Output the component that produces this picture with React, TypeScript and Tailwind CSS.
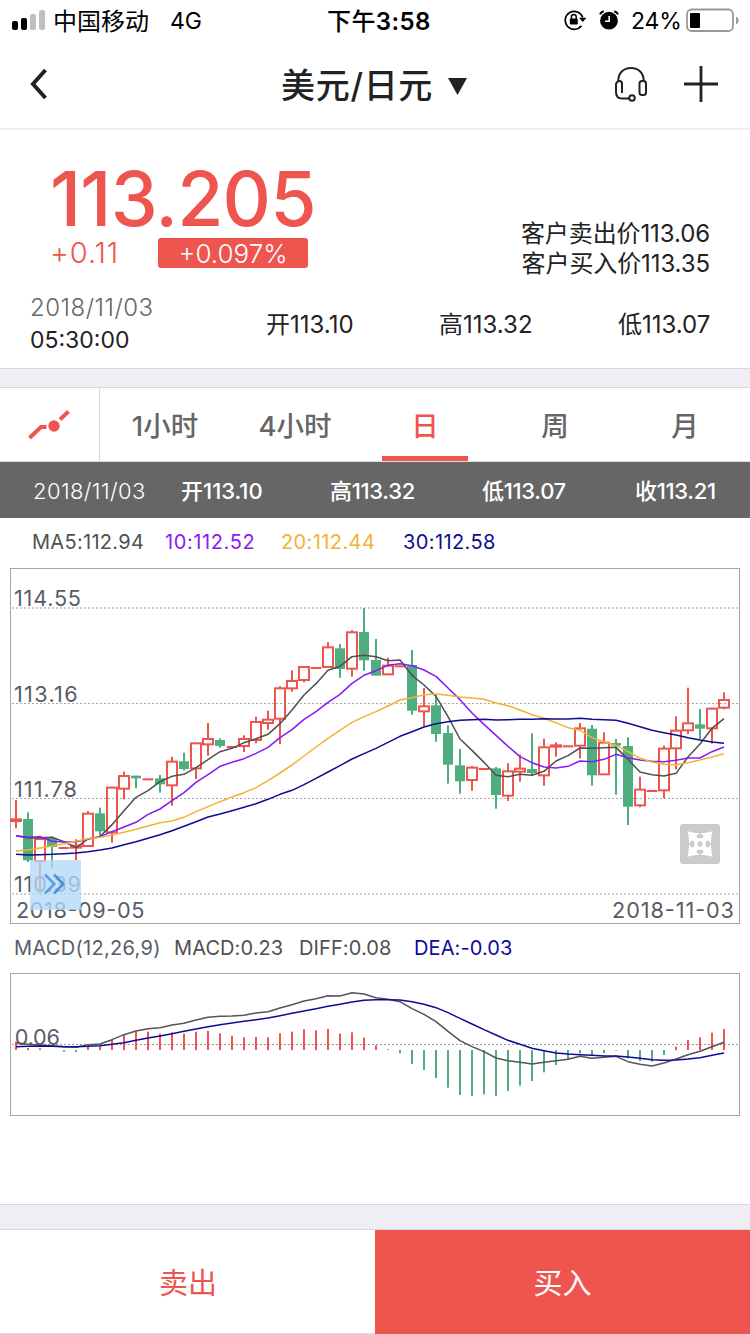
import { useState } from "react";

const RED = "#ee554f";
const GREEN = "#4fae80";

// [up(1)/down(0), high, bodyTop, bodyBottom, low], chart units are 1/3 px
const candles: number[][] = [
  [1, 705, 763, 768, 790],
  [0, 742, 763, 885, 891],
  [1, 812, 822, 888, 985],
  [0, 815, 820, 845, 910],
  [1, 849, 849, 849, 849],
  [1, 823, 842, 848, 885],
  [1, 738, 746, 843, 845],
  [0, 728, 746, 798, 815],
  [1, 665, 668, 802, 833],
  [1, 620, 633, 671, 703],
  [0, 632, 633, 639, 670],
  [1, 643, 643, 643, 643],
  [0, 630, 641, 657, 683],
  [1, 575, 590, 661, 722],
  [0, 563, 590, 611, 617],
  [1, 533, 535, 610, 642],
  [1, 474, 522, 538, 572],
  [0, 520, 526, 542, 548],
  [1, 546, 546, 546, 546],
  [1, 511, 522, 543, 561],
  [1, 455, 471, 525, 535],
  [1, 437, 464, 474, 494],
  [1, 364, 370, 461, 537],
  [1, 316, 348, 370, 380],
  [1, 303, 306, 345, 352],
  [1, 309, 309, 309, 309],
  [1, 231, 247, 306, 308],
  [0, 237, 251, 311, 338],
  [1, 196, 202, 311, 335],
  [0, 129, 202, 285, 317],
  [0, 222, 286, 331, 331],
  [1, 278, 302, 328, 328],
  [1, 304, 304, 304, 304],
  [0, 255, 301, 436, 449],
  [1, 369, 424, 439, 485],
  [0, 390, 422, 506, 530],
  [0, 481, 505, 598, 656],
  [0, 552, 602, 648, 686],
  [1, 603, 608, 645, 677],
  [1, 612, 612, 612, 612],
  [0, 606, 611, 689, 731],
  [1, 595, 619, 692, 708],
  [1, 569, 611, 620, 650],
  [0, 505, 613, 623, 632],
  [1, 521, 547, 631, 662],
  [1, 532, 541, 545, 575],
  [1, 544, 544, 544, 544],
  [1, 474, 490, 542, 580],
  [0, 480, 492, 630, 662],
  [1, 502, 533, 628, 628],
  [0, 522, 535, 541, 689],
  [0, 517, 544, 724, 780],
  [1, 635, 674, 721, 727],
  [1, 678, 678, 678, 678],
  [1, 542, 551, 676, 700],
  [1, 454, 497, 550, 613],
  [1, 368, 475, 496, 507],
  [0, 432, 479, 490, 522],
  [1, 428, 431, 490, 536],
  [1, 382, 405, 428, 433],
];

const ma5 = [
  812, 819, 818, 817, 830, 848, 822, 815, 779, 737, 697, 677, 650, 634, 628,
  608, 584, 560, 550, 533, 521, 508, 476, 435, 390, 356, 316, 304, 275, 271,
  275, 287, 285, 331, 360, 394, 455, 522, 556, 592, 631, 635, 628, 631, 619,
  588, 572, 549, 550, 548, 547, 583, 621, 629, 633, 625, 576, 537, 490, 461,
];
const ma10 = [
  812, 817, 815, 829, 831, 830, 822, 815, 800, 786, 772, 748, 732, 707, 683,
  652, 629, 604, 592, 581, 565, 547, 518, 494, 463, 440, 412, 388, 355, 331,
  317, 301, 296, 302, 315, 334, 369, 404, 444, 478, 511, 544, 575, 593, 606,
  609, 604, 588, 590, 583, 568, 578, 585, 589, 590, 586, 579, 579, 560, 546,
];
const ma20 = [
  858, 855, 849, 843, 836, 829, 821, 817, 810, 802, 793, 783, 773, 768, 757,
  740, 725, 710, 696, 683, 668, 647, 624, 600, 573, 546, 520, 496, 472, 455,
  440, 423, 405, 398, 389, 387, 391, 396, 399, 403, 414, 422, 435, 449, 460,
  473, 488, 496, 518, 530, 541, 560, 580, 591, 598, 599, 593, 585, 576, 566,
];
const ma30 = [
  868, 870, 869, 868, 866, 864, 860, 855, 849, 839, 830, 820, 809, 797, 784,
  770, 756, 747, 737, 727, 716, 703, 688, 676, 659, 640, 621, 602, 582, 566,
  550, 532, 514, 500, 486, 476, 470, 466, 464, 463, 465, 464, 463, 463, 461,
  462, 462, 460, 463, 464, 466, 475, 485, 496, 503, 510, 518, 525, 531, 535,
];

const macd = [
  335, 354, 355, 360, 365, 366, 349, 349, 329, 314, 304, 305, 311, 307, 311,
  305, 303, 310, 317, 322, 321, 322, 310, 305, 298, 301, 297, 311, 307, 323,
  346, 358, 370, 402, 420, 444, 473, 495, 498, 493, 498, 483, 467, 453, 427,
  405, 388, 370, 377, 369, 362, 385, 393, 395, 375, 350, 330, 322, 308, 297,
];
const diff = [
  338, 343, 345, 347, 350, 352, 344, 342, 329, 314, 303, 296, 293, 285, 280,
  270, 262, 259, 258, 256, 249, 245, 234, 224, 213, 206, 197, 198, 188, 192,
  203, 208, 215, 236, 253, 275, 304, 332, 350, 365, 384, 392, 397, 402, 397,
  392, 388, 379, 385, 382, 379, 395, 403, 408, 399, 387, 374, 364, 350, 337,
];
const dea = [
  350, 349, 348, 349, 350, 350, 349, 347, 343, 338, 331, 324, 318, 311, 304,
  297, 290, 284, 279, 274, 269, 264, 257, 250, 243, 236, 229, 223, 216, 211,
  209, 209, 210, 215, 223, 233, 248, 265, 282, 299, 315, 331, 343, 355, 362,
  369, 372, 374, 376, 378, 378, 381, 385, 389, 391, 390, 387, 383, 376, 369,
];

const xAt = (i: number) => 48 + 36 * i;

function Line({ data, color }: { data: number[]; color: string }) {
  return (
    <polyline
      points={data.map((y, i) => `${xAt(i)},${y}`).join(" ")}
      fill="none"
      stroke={color}
      strokeWidth="4.6"
      strokeLinejoin="round"
    />
  );
}

function Candle({ data, index }: { data: number[]; index: number }) {
  const [up, high, top, bottom, low] = data;
  const x = xAt(index);
  if (high === low) {
    return <rect x={x - 16} y={top - 3} width="32" height="6" fill={RED} />;
  }
  if (!up) {
    return (
      <g fill={GREEN}>
        <rect x={x - 3} y={high} width="6" height={low - high} />
        <rect x={x - 15} y={top - 1} width="30" height={bottom - top + 2} />
      </g>
    );
  }
  return (
    <g fill={RED}>
      <rect x={x - 3} y={high} width="6" height={top - high} />
      <rect x={x - 3} y={bottom} width="6" height={low - bottom} />
      <rect
        x={x - 15}
        y={top}
        width="30"
        height={bottom - top}
        fill="none"
        stroke={RED}
        strokeWidth="6"
      />
    </g>
  );
}

// 축 라벨
function Label({ x, y, w, text }: { x: number; y: number; w: number; text: string }) {
  return (
    <text x={x} y={y} textLength={w} fontSize="65" fill="#585c66">
      {text}
    </text>
  );
}

function KLineChart() {
  return (
    <svg width="730" height="356" viewBox="30 9 2190 1068" className="block">
      <rect x="31.5" y="10.5" width="2187" height="1065" fill="none" stroke="#a6a6a6" strokeWidth="3" />
      {[129, 987].map((y) => (
        <line key={y} x1="36" x2="2214" y1={y} y2={y} stroke="#d0d0d0" strokeWidth="6" strokeDasharray="6 6" />
      ))}
      {[415.5, 700.5].map((y) => (
        <line key={y} x1="36" x2="2214" y1={y} y2={y} stroke="#a8a8a8" strokeWidth="3" strokeDasharray="6 6" />
      ))}
      {candles.map((c, i) => (
        <Candle key={i} data={c} index={i} />
      ))}
      <Line data={ma5} color="#505050" />
      <Line data={ma10} color="#8a19f5" />
      <Line data={ma20} color="#f3b234" />
      <Line data={ma30} color="#0d0d92" />
      <Label x={42} y={124} w={201} text="114.55" />
      <Label x={42} y={411} w={191} text="113.16" />
      <Label x={42} y={697} w={189} text="111.78" />
      <Label x={42} y={981} w={201} text="110.39" />
      <Label x={48} y={1059} w={385} text="2018-09-05" />
      <Label x={1836} y={1059} w={366} text="2018-11-03" />

      <rect x="90" y="885" width="153" height="150" fill="#b4d8fa" fillOpacity="0.78" />
      <g fill="none" strokeWidth="8">
        <path d="M135 929l28 28-28 28" stroke="#5b9fe0" />
        <path d="M162 929l28 28-28 28" stroke="#4a90d9" />
      </g>

      <rect x="2040" y="777" width="120" height="120" rx="9" fill="#cbcbcb" />
      <g transform="translate(2100 837)">
        <path d="M-37-38Q0-26 37-38Q29 0 37 38Q0 27-37 38Q-29 0-37-38Z" fill="#fff" />
        <g fill="#cbcbcb">
          <circle r="8" />
          <path d="M0-33l11 9-4 7H-7l-4-7zM0 33l11-9-4-7H-7l-4 7zM-34 0l10-11 7 4V7l-7 4zM34 0L24-11l-7 4V7l7 4z" />
        </g>
      </g>
    </svg>
  );
}

function MacdChart() {
  return (
    <svg width="730" height="143" viewBox="30 129 2190 429" className="block">
      <rect x="31.5" y="130.5" width="2187" height="426" fill="none" stroke="#a6a6a6" strokeWidth="3" />
      <line x1="36" x2="2214" y1="343.5" y2="343.5" stroke="#999" strokeWidth="3" strokeDasharray="6 6" />
      {macd.map((y, i) => (
        <rect
          key={i}
          x={xAt(i) - 3}
          y={Math.min(y, 360)}
          width="6"
          height={Math.abs(y - 360)}
          fill={y < 360 ? RED : GREEN}
        />
      ))}
      <Label x={44} y={345} w={136} text="0.06" />
      <Line data={diff} color="#555" />
      <Line data={dea} color="#0c0c9c" />
    </svg>
  );
}

function StatusBar() {
  return (
    <div className="flex h-10 items-center pl-3 text-black">
      <svg width="34" height="20" viewBox="0 0 34 20">
        <rect x="0" y="11" width="6" height="9" rx="2" />
        <rect x="9" y="8" width="6" height="12" rx="2" />
        <rect x="18" y="4" width="6" height="16" rx="2" fill="#bfbfbf" />
        <rect x="27" y="0" width="6" height="20" rx="2" fill="#bfbfbf" />
      </svg>
      <span className="ml-[7px] w-[117px] pt-[3px] text-[24px]">中国移动</span>
      <span className="w-[157px] pt-[2px] text-[23px]">4G</span>
      <span className="w-[237px] pt-[3px] text-[24px] font-semibold tracking-[0.4px]">
        <span className="font-medium">下午</span>3:58
      </span>
      <svg width="22" height="22" viewBox="0 0 22 22" fill="none" className="shrink-0">
        <path d="M17.4 16.8A9 9 0 1 1 18.8 8.6" stroke="#000" strokeWidth="1.7" />
        <path d="M15 8.8h7.4L18.8 13z" fill="#000" />
        <rect x="5.8" y="9.6" width="8" height="6" rx="1" fill="#000" />
        <path d="M7.4 10V7.8a2.4 2.4 0 0 1 4.8 0V10" stroke="#000" strokeWidth="1.5" />
      </svg>
      <svg width="20" height="20" viewBox="0 0 20 20" fill="none" className="ml-[13px] shrink-0">
        <circle cx="10" cy="10.7" r="8.9" fill="#000" />
        <path d="M10.2 6v5.2H6" stroke="#fff" strokeWidth="1.6" />
        <path d="M1 4.4Q2 1.8 4.8 1.2M19 4.4Q18 1.8 15.2 1.2" stroke="#000" strokeWidth="2" />
      </svg>
      <span className="ml-3 w-[55px] pt-[2px] text-[23px] tracking-[-0.2px]">24%</span>
      <svg width="54" height="24" viewBox="0 0 54 24" fill="none" className="shrink-0">
        <rect x="1" y="1.5" width="46" height="21.5" rx="4.5" stroke="#999" strokeWidth="1.8" />
        <rect x="4" y="5" width="10" height="15" rx="1" fill="#000" />
        <path d="M50 8.500q2.600 1 2.600 4t-2.600 4z" fill="#999" />
      </svg>
    </div>
  );
}

function Header() {
  return (
    <div className="flex h-[90px] items-center border-b-2 border-[#efeef5] pl-[30px] text-[#222]">
      <svg width="20" height="32" viewBox="0 0 20 32" fill="none">
        <path d="M15.5 2L3 16l12.500 14" stroke="#222" strokeWidth="4" />
      </svg>
      <span className="ml-[231px] w-[167px] pt-[3px] text-[34px] font-medium tracking-[0.7px]">美元/日元</span>
      <svg width="19" height="17" viewBox="0 0 19 17" className="mt-[5px]">
        <path d="M0 0h19l-9.500 17z" fill="#222" />
      </svg>
      <svg width="34" height="36" viewBox="0 0 34 36" fill="none" stroke="#222" strokeWidth="2" className="ml-[147px]">
        <path d="M4.2 15.5C4.2 7 9.5 2 17 2s12.8 5 12.8 13.5" />
        <rect x="25.500" y="15" width="6.500" height="14" rx="2.500" />
        <path d="M8 27V17.5Q8 15 5.500 15T2 18v8q0 6.500 6 6.500h7" />
        <circle cx="18" cy="32" r="2.800" />
      </svg>
      <svg width="34" height="36" viewBox="0 0 34 36" className="ml-[36px]" stroke="#222" strokeWidth="2.800">
        <path d="M17 0v36M0 18h34" />
      </svg>
    </div>
  );
}

function Quote() {
  return (
    <div className="h-[238px] text-[#222]">
      <div className="flex justify-between pr-10 pl-[50px] pt-8">
        <div>
          <div className="h-[76px] text-[75px] leading-[74px] font-medium tracking-[-0.8px] text-[#ee554f]">113.205</div>
          <div className="flex h-[30px] items-center leading-[30px] font-light">
            <span className="w-[108px] text-[29px] tracking-[0.9px] text-[#ee554f]">+0.11</span>
            <span className="h-[30px] w-[150px] rounded-[3px] bg-[#ee554f] pt-px text-center text-[26px] text-white">
              +0.097%
            </span>
          </div>
        </div>
        <div className="pt-[57px] text-right text-[24px] leading-[30px] tracking-[-0.1px]">
          <p>客户卖出价113.06</p>
          <p>客户买入价113.35</p>
        </div>
      </div>
      <div className="mt-[12px] flex items-center pl-[30px] text-[24px] leading-[33px]">
        <div className="w-[236px]">
          <p className="font-light tracking-[0.5px] text-[#666]">2018/11/03</p>
          <p className="text-[23px]">05:30:00</p>
        </div>
        <span className="w-[173px]">开113.10</span>
        <span className="w-[179px]">高113.32</span>
        <span>低113.07</span>
      </div>
    </div>
  );
}

const tabs = ["1小时", "4小时", "日", "周", "月"];

function Tabs() {
  const [active, setActive] = useState(2);

  return (
    <div className="flex h-[74px] border-b border-[#ddd]">
      <div className="flex w-[100px] items-center justify-center border-r border-[#d9d9e0] pr-[2px]">
        <svg width="42" height="32" viewBox="0 0 42 32" fill="none" stroke={RED} strokeWidth="4">
          <path d="M1.500 29L13 18h5.500M32 10.500L40.500 2.500" />
          <circle cx="26" cy="17" r="5.700" fill={RED} stroke="none" />
        </svg>
      </div>
      {tabs.map((tab, i) => (
        <button
          key={tab}
          onClick={() => setActive(i)}
          className={`flex w-[130px] flex-col items-center text-[27.5px] font-medium ${
            i === active ? "text-[#ee554f]" : "text-[#666]"
          }`}
        >
          <span className="h-[68px] leading-[76px]">{tab}</span>
          {i === active && <span className="h-[5px] w-[86px] bg-[#ee554f]" />}
        </button>
      ))}
    </div>
  );
}

export default function App() {
  return (
    <main className="flex h-[1334px] w-[750px] flex-col bg-white font-['Inter','Noto_Sans_CJK_SC',sans-serif] leading-none whitespace-nowrap">
      <StatusBar />
      <Header />
      <Quote />
      <div className="h-5 shrink-0 border-y border-[#d8d7e0] bg-[#efeef5]" />
      <Tabs />

      {/* 선택한 날짜의 시세 */}
      <div className="flex h-14 items-center bg-[#666] pt-px pl-[33px] text-[22px] font-medium tracking-[-0.3px] text-white">
        <span className="w-[148px] font-light tracking-[0.4px]">2018/11/03</span>
        <span className="w-[149px] tracking-normal">开113.10</span>
        <span className="w-[152px]">高113.32</span>
        <span className="w-[153px]">低113.07</span>
        <span>收113.21</span>
      </div>
      <div className="flex h-[50px] items-center pb-[3px] pl-8 text-[20px] tracking-[0.4px]">
        <span className="w-[133px] tracking-[0.3px] text-[#505050]">MA5:112.94</span>
        <span className="w-[116px] tracking-[0.6px] text-[#8a19f5]">10:112.52</span>
        <span className="w-[122px] text-[#f3b234]">20:112.44</span>
        <span className="text-[#0d0d92]">30:112.58</span>
      </div>
      <div className="px-[10px]">
        <KLineChart />
      </div>
      <div className="flex h-[49px] items-center pb-[2px] pl-[14px] text-[20px] tracking-[0.1px] text-[#505050]">
        <span className="w-[160px] tracking-[0.3px] text-[#585c66]">MACD(12,26,9)</span>
        <span className="w-[125px]">MACD:0.23</span>
        <span className="w-[115px]">DIFF:0.08</span>
        <span className="text-[#0c0c9c]">DEA:-0.03</span>
      </div>
      <div className="px-[10px]">
        <MacdChart />
      </div>

      <div className="mt-auto h-[26px] shrink-0 border-y border-[#d8d7e0] bg-[#efeef5]" />
      <div className="flex h-[104px] shrink-0 text-[29px]">
        <button className="w-1/2 border-b border-[#ddd] pt-1 pl-px text-[#ee554f]">卖出</button>
        <button className="w-1/2 bg-[#ee554f] pt-[3px] text-white">买入</button>
      </div>
    </main>
  );
}
